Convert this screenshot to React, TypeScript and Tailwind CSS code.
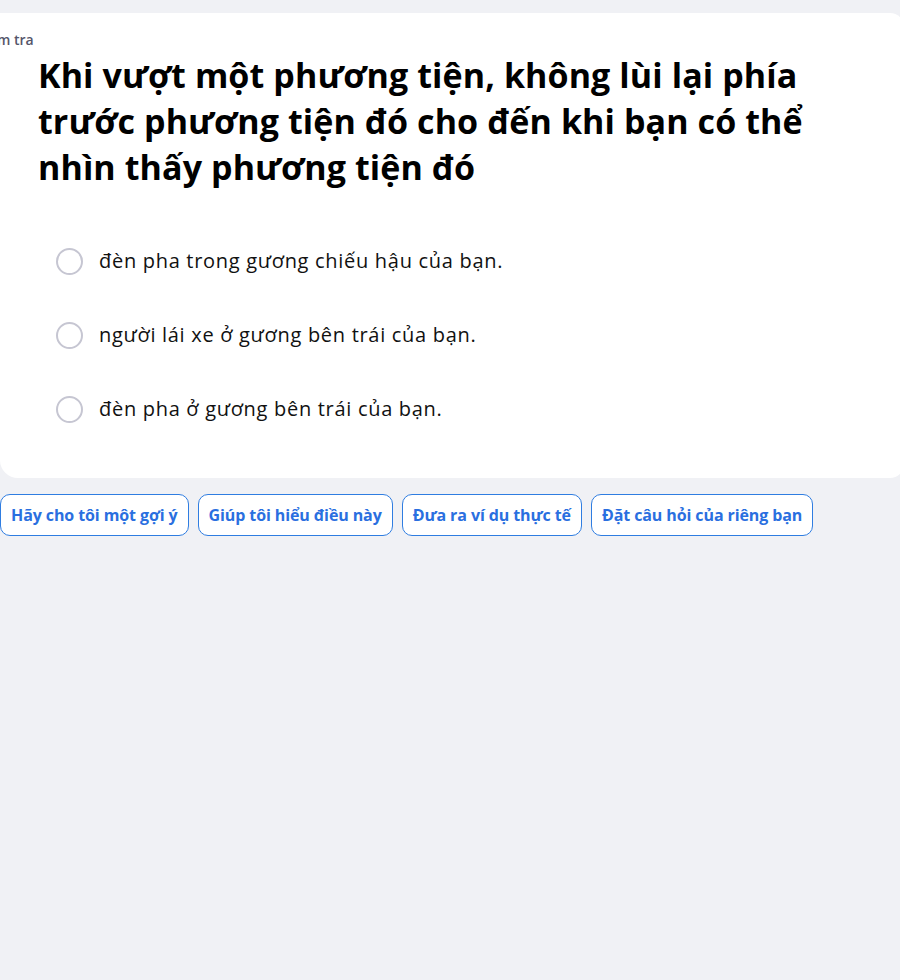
import React from 'react';

const options = [
  'đèn pha trong gương chiếu hậu của bạn.',
  'người lái xe ở gương bên trái của bạn.',
  'đèn pha ở gương bên trái của bạn.',
];

const prompts = [
  'Hãy cho tôi một gợi ý',
  'Giúp tôi hiểu điều này',
  'Đưa ra ví dụ thực tế',
  'Đặt câu hỏi của riêng bạn',
];

const App = () => {
  return (
    <div
      className="min-h-[980px] bg-[#f0f1f5] pt-[13px] overflow-hidden"
      style={{ fontFamily: '"Open Sans", Lato, sans-serif' }}
    >
      {/* Question card */}
      <section className="w-[904px] bg-white rounded-bl-[18px] rounded-r-[14px] pt-[18px] pb-[32px]">
        <div className="-ml-[24px] text-[14px] font-semibold text-[#55556a] leading-[18px]">Kiểm tra</div>
        <h1 className="pl-[38px] pr-[80px] mt-[3px] text-[34px] font-bold leading-[46px] text-black tracking-[0.1px]">
          Khi vượt một phương tiện, không lùi lại phía trước phương tiện đó cho đến khi bạn có thể nhìn thấy phương tiện đó
        </h1>
        <div className="mt-[34px] flex flex-col">
          {options.map((o) => (
            <label key={o} className="flex items-center h-[74px] pl-[56px] gap-[16px] cursor-pointer">
              <span className="w-[27px] h-[27px] rounded-full border-2 border-[#c6c6d2] bg-white shrink-0" />
              <span className="text-[20px] text-[#111] tracking-[0.7px]">{o}</span>
            </label>
          ))}
        </div>
      </section>

      {/* Prompt chips */}
      <div className="mt-[16px] flex gap-[9px]">
        {prompts.map((p) => (
          <button
            key={p}
            className="h-[42px] px-[10px] rounded-[10px] border border-[#2f7de1] bg-white text-[16px] font-bold text-[#2a6fe0] tracking-[-0.1px]"
          >
            {p}
          </button>
        ))}
      </div>
    </div>
  );
};

export default App;
